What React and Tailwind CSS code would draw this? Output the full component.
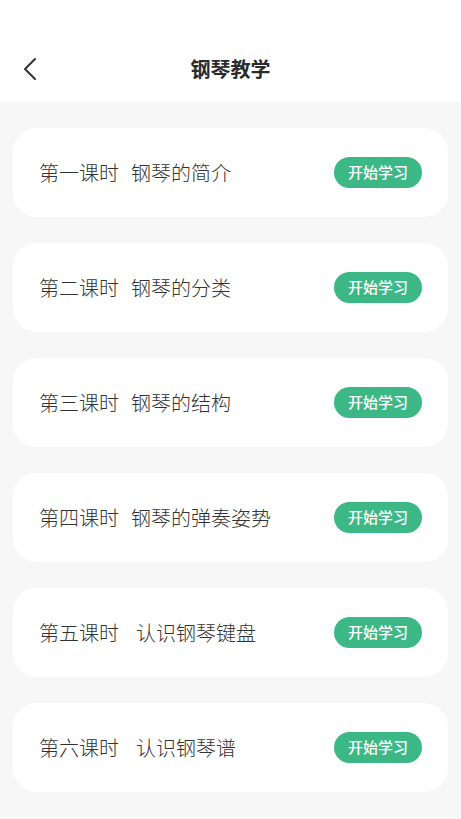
import React from 'react';

const LESSONS = [
    { no: '第一课时', title: '钢琴的简介', gap: 'ml-3' },
    { no: '第二课时', title: '钢琴的分类', gap: 'ml-3' },
    { no: '第三课时', title: '钢琴的结构', gap: 'ml-3' },
    { no: '第四课时', title: '钢琴的弹奏姿势', gap: 'ml-3' },
    { no: '第五课时', title: '认识钢琴键盘', gap: 'ml-[17px]' },
    { no: '第六课时', title: '认识钢琴谱', gap: 'ml-[17px]' },
];

const font = { fontFamily: '"Noto Sans CJK SC", "Noto Sans", sans-serif' };

export default function App() {
    return (
        <div className="w-[461px] h-[819px] bg-[#f7f7f7] overflow-hidden" style={font}>
            <div className="h-[102px] bg-white relative flex items-end justify-center pb-[18px]">
                <svg className="absolute left-[22px] top-[57px]" width="16" height="24" viewBox="0 0 16 24" fill="none">
                    <path d="M13 2 L3 12 L13 22" stroke="#333" strokeWidth="2" strokeLinecap="round" strokeLinejoin="round" />
                </svg>
                <h1 className="text-[20px] font-bold text-[#2b2b2b] leading-[30px]">钢琴教学</h1>
            </div>

            <div className="px-[13px] pt-[26px] flex flex-col gap-[26px]">
                {LESSONS.map((l, i) => (
                    <div key={i} className="h-[89px] bg-white rounded-[24px] flex items-center justify-between pl-[26px] pr-[26px]">
                        <div className="text-[20px] font-light text-[#333] leading-none">
                            <span>{l.no}</span>
                            <span className={l.gap}>{l.title}</span>
                        </div>
                        <div className="w-[88px] h-[31px] rounded-full bg-[#3bb886] text-white text-[15px] font-medium flex items-center justify-center">
                            开始学习
                        </div>
                    </div>
                ))}
            </div>
        </div>
    );
}
